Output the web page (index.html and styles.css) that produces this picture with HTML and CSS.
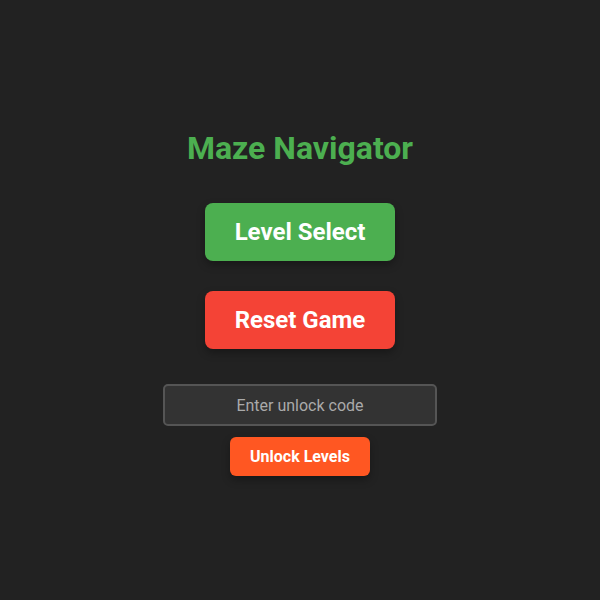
FILE: index.html
```html
<!DOCTYPE html>
<html>
<head>
<meta charset="utf-8">
<link rel="stylesheet" href="styles.css">
</head>
<body>
<main class="menu">
  <h1 class="title">Maze Navigator</h1>
  <button class="big-btn green">Level Select</button>
  <button class="big-btn red">Reset Game</button>
  <div class="unlock">
    <input class="code-input" type="text" placeholder="Enter unlock code">
    <button class="small-btn">Unlock Levels</button>
  </div>
</main>
</body>
</html>
```
FILE: styles.css
```css
html, body {
  margin: 0;
  height: 100%;
}
body {
  background: #222222;
  font-family: Roboto, "Liberation Sans", sans-serif;
  color: #fff;
}
.menu {
  box-sizing: border-box;
  height: 600px;
  padding-top: 6px;
  display: flex;
  flex-direction: column;
  align-items: center;
  justify-content: center;
}
.title {
  margin: 0 0 36px;
  font-size: 32px;
  font-weight: 700;
  color: #4CAF50;
  line-height: 37px;
}
.big-btn {
  width: 190px;
  height: 58px;
  border: none;
  border-radius: 8px;
  color: #fff;
  font-family: inherit;
  font-size: 24px;
  font-weight: 700;
  box-shadow: 0 4px 8px rgba(0,0,0,0.3);
  cursor: pointer;
}
.green { background: #4CAF50; margin-bottom: 30px; }
.red { background: #F44336; margin-bottom: 35px; }
.unlock {
  display: flex;
  flex-direction: column;
  align-items: center;
  gap: 11px;
}
.code-input {
  box-sizing: border-box;
  width: 274px;
  height: 42px;
  background: #333333;
  border: 2px solid #555555;
  border-radius: 5px;
  color: #fff;
  font-family: inherit;
  font-size: 16px;
  text-align: center;
  outline: none;
}
.code-input::placeholder { color: #aaaaaa; }
.small-btn {
  width: 140px;
  height: 39px;
  background: #FF5722;
  border: none;
  border-radius: 6px;
  color: #fff;
  font-family: inherit;
  font-size: 16px;
  font-weight: 700;
  box-shadow: 0 4px 8px rgba(0,0,0,0.3);
  cursor: pointer;
}
```
